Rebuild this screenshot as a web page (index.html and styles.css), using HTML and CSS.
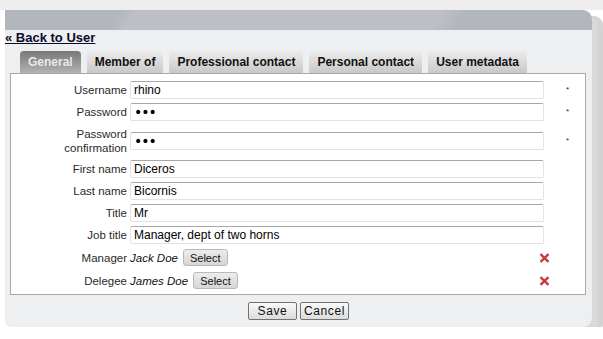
FILE: index.html
```html
<!DOCTYPE html>
<html lang="en">
<head>
    <meta charset="UTF-8">
    <meta name="viewport" content="width=device-width, initial-scale=1.0">
    <title>Edit user</title>
    <link rel="stylesheet" href="styles.css">
</head>
<body>
    <div class="panel">
        <div class="panel-head"></div>
        <a class="back" href="#">&laquo; Back to User</a>

        <ul class="tabs">
            <li class="tab active">General</li>
            <li class="tab">Member of</li>
            <li class="tab">Professional contact</li>
            <li class="tab">Personal contact</li>
            <li class="tab">User metadata</li>
        </ul>

        <form class="form-box">
            <div class="form-grid">
                <label class="lbl">Username</label>
                <input class="field" type="text" value="rhino">
                <span class="req">*</span>

                <label class="lbl">Password</label>
                <input class="field pw" type="password" value="abc">
                <span class="req">*</span>

                <label class="lbl two-line">Password<br>confirmation</label>
                <input class="field pw" type="password" value="abc">
                <span class="req">*</span>

                <label class="lbl">First name</label>
                <input class="field" type="text" value="Diceros">
                <span></span>

                <label class="lbl">Last name</label>
                <input class="field" type="text" value="Bicornis">
                <span></span>

                <label class="lbl">Title</label>
                <input class="field" type="text" value="Mr">
                <span></span>

                <label class="lbl">Job title</label>
                <input class="field" type="text" value="Manager, dept of two horns">
                <span></span>

                <label class="lbl">Manager</label>
                <div class="pick">
                    <em>Jack Doe</em>
                    <button type="button" class="select-btn">Select</button>
                    <span class="remove">
                        <svg width="11" height="10" viewBox="0 0 11 10"><path d="M1.5 1.2 L9.5 8.8 M9.5 1.2 L1.5 8.8" stroke="#c9393b" stroke-width="2.4" stroke-linecap="butt"/></svg>
                    </span>
                </div>
                <span></span>

                <label class="lbl">Delegee</label>
                <div class="pick">
                    <em>James Doe</em>
                    <button type="button" class="select-btn">Select</button>
                    <span class="remove">
                        <svg width="11" height="10" viewBox="0 0 11 10"><path d="M1.5 1.2 L9.5 8.8 M9.5 1.2 L1.5 8.8" stroke="#c9393b" stroke-width="2.4" stroke-linecap="butt"/></svg>
                    </span>
                </div>
                <span></span>
            </div>
        </form>

        <div class="actions">
            <button type="button" class="btn">Save</button>
            <button type="button" class="btn">Cancel</button>
        </div>
    </div>
</body>
</html>
```

FILE: styles.css
```css
body {
    margin: 0;
    background-color: #ffffff;
    border-top: 10px solid #eeeeee;
    font-family: 'Liberation Sans', Arial, sans-serif;
    overflow: hidden;
}
.panel {
    width: 587px;
    height: 317px;
    margin-left: 5px;
    background-color: #eeeff1;
    border-radius: 0 9px 9px 6px;
    box-shadow: 6px 6px 0 #d9d9d9, 11px 6px 0 #d3d3d3;
}
.panel-head {
    height: 20px;
    border-radius: 0 9px 0 0;
    background: linear-gradient(120deg, #b2b6bd 0, #b2b6bd 100px, #bcbfc5 112px, #bcbfc5 380px, #b2b6bd 400px);
}
.back {
    display: block;
    width: max-content;
    margin-top: 1px;
    font-size: 13px;
    font-weight: bold;
    line-height: 13px;
    color: #0a0a2a;
    text-decoration: underline;
}
.tabs {
    display: flex;
    gap: 6px;
    list-style: none;
    margin: 7px 0 0 15px;
    padding: 0;
}
.tab {
    height: 22px;
    line-height: 22px;
    padding: 0 8px;
    font-size: 12px;
    font-weight: bold;
    color: #111111;
    border-radius: 4px 4px 0 0;
    background: linear-gradient(#ececec, #c8c8c8);
}
.tab.active {
    color: #e8e8e8;
    background: linear-gradient(#787878, #b2b2b2);
}
.form-box {
    margin: 0 6px 0 5px;
    padding: 7px 0 4px;
    background-color: #ffffff;
    border: 1px solid #a9a9a9;
}
.form-grid {
    display: grid;
    grid-template-columns: 116px 414px 1fr;
    column-gap: 3px;
    row-gap: 4px;
    align-items: center;
}
.lbl {
    font-size: 11.5px;
    color: #2a2a2a;
    text-align: right;
    line-height: 14px;
}
.lbl.two-line {
    padding: 2px 0 1px;
}
.field {
    box-sizing: border-box;
    width: 414px;
    height: 18px;
    margin: 0;
    padding: 0 3px;
    font-family: 'Liberation Sans', Arial, sans-serif;
    font-size: 12px;
    color: #000000;
    border: 1px solid #e2e2e2;
    border-top-color: #a8a8a8;
    border-radius: 2px;
    outline: none;
}
.field.pw {
    font-family: 'DejaVu Sans', sans-serif;
    font-size: 14px;
    letter-spacing: -1px;
}
.req {
    padding-left: 19px;
    font-size: 8px;
    color: #1c2a4a;
    line-height: 8px;
}
.pick {
    display: flex;
    align-items: center;
    min-height: 19px;
    font-size: 11.5px;
}
.pick em {
    color: #111111;
    margin-right: 5px;
}
.select-btn {
    height: 17px;
    padding: 0 6px;
    font-family: 'Liberation Sans', Arial, sans-serif;
    font-size: 11px;
    color: #111111;
    background: linear-gradient(#ececec, #d6d6d6);
    border: 1px solid #b9b9b9;
    border-radius: 3px;
}
.remove {
    margin-left: auto;
    margin-right: -6px;
    display: flex;
}
.actions {
    display: flex;
    justify-content: center;
    gap: 3px;
    margin-top: 7px;
}
.btn {
    box-sizing: border-box;
    width: 49px;
    height: 18px;
    padding: 0;
    font-family: 'Liberation Sans', Arial, sans-serif;
    font-size: 12px;
    letter-spacing: 0.6px;
    color: #111111;
    background: linear-gradient(#fafafa, #dcdcdc);
    border: 1px solid #737373;
    border-radius: 2px;
}
```
